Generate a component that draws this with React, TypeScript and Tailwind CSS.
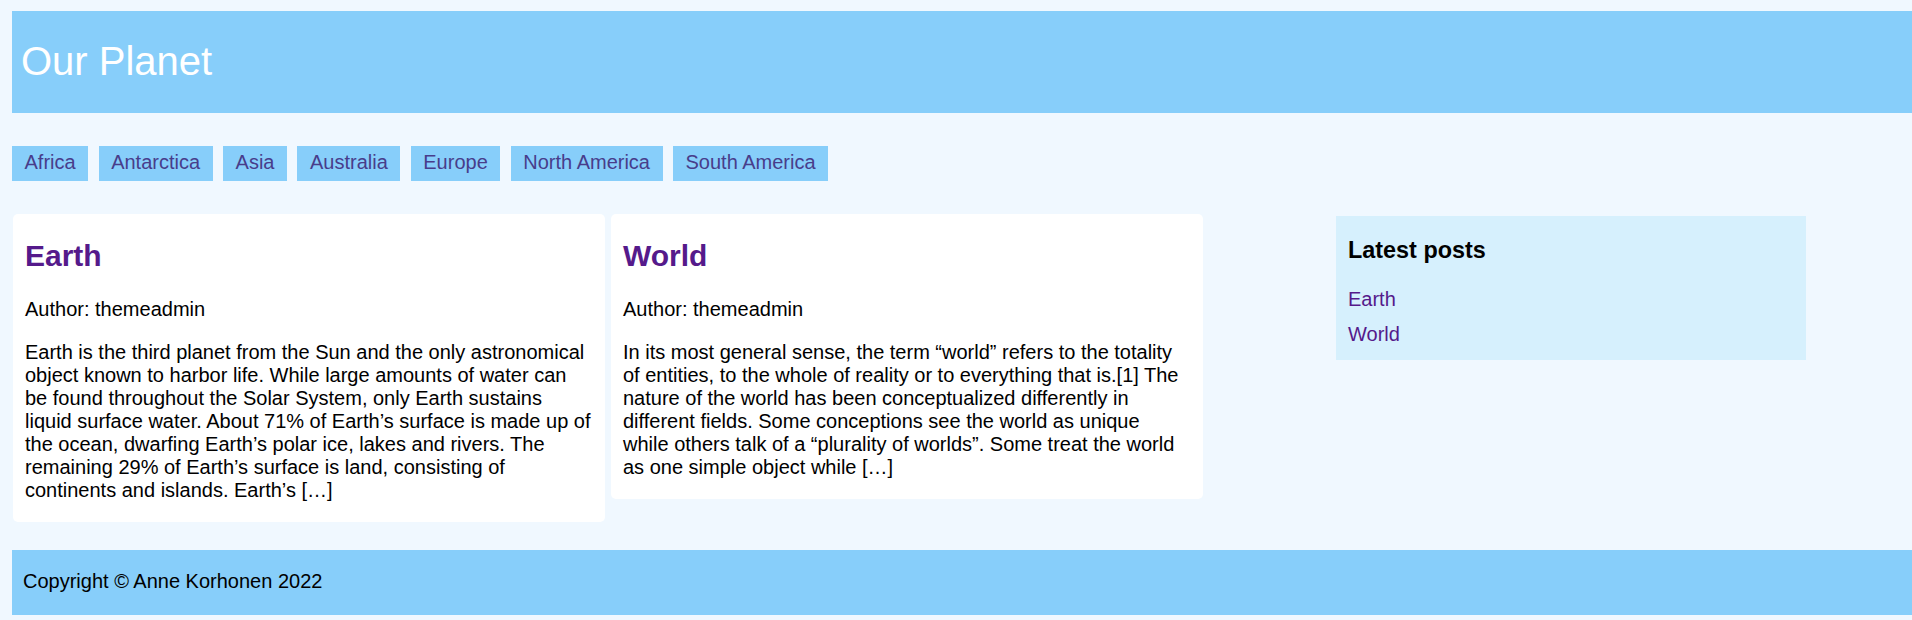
const CONTINENTS = [
  "Africa",
  "Antarctica",
  "Asia",
  "Australia",
  "Europe",
  "North America",
  "South America",
];

const POSTS = [
  {
    title: "Earth",
    author: "themeadmin",
    excerpt:
      "Earth is the third planet from the Sun and the only astronomical object known to harbor life. While large amounts of water can be found throughout the Solar System, only Earth sustains liquid surface water. About 71% of Earth’s surface is made up of the ocean, dwarfing Earth’s polar ice, lakes and rivers. The remaining 29% of Earth’s surface is land, consisting of continents and islands. Earth’s […]",
    narrow: false,
  },
  {
    title: "World",
    author: "themeadmin",
    excerpt:
      "In its most general sense, the term “world” refers to the totality of entities, to the whole of reality or to everything that is.[1] The nature of the world has been conceptualized differently in different fields. Some conceptions see the world as unique while others talk of a “plurality of worlds”. Some treat the world as one simple object while […]",
    narrow: true,
  },
];

interface PostCardProps {
  title: string;
  author: string;
  excerpt: string;
  narrow: boolean;
}

const PostCard = ({ title, author, excerpt, narrow }: PostCardProps) => (
  <article className="w-[592px] shrink-0 rounded-[5px] bg-white px-[12px] pt-[25px] pb-[20px]">
    <h2 className="mb-[25px] text-[30px] font-bold leading-[34.5px] text-[#551a8b]">
      <a href="#">{title}</a>
    </h2>
    <p className="mb-[20px] leading-[23px]">Author: {author}</p>
    <p className={narrow ? "max-w-[560px] leading-[23px]" : "leading-[23px]"}>{excerpt}</p>
  </article>
);

export default function App() {
  return (
    <div className="min-h-screen bg-[#f0f8ff] pt-[11px] pl-[12px] text-[20px] text-black font-['Liberation_Sans',Arial,sans-serif]">
      <header className="bg-[#87cefa] pl-[9px]">
        <h1 className="pt-[27px] pb-[28.5px] text-[40px] leading-[46px] text-white">Our Planet</h1>
      </header>

      <nav className="mt-[33px] flex gap-[10.5px]">
        {CONTINENTS.map((name) => (
          <a
            key={name}
            href="#"
            className="bg-[#87cefa] px-[12.5px] pt-[5px] pb-[7px] leading-[23px] text-[#483d8b]"
          >
            {name}
          </a>
        ))}
      </nav>

      <main className="mt-[33px] flex items-start pl-[1px]">
        <div className="flex items-start gap-[6px]">
          {POSTS.map((post) => (
            <PostCard key={post.title} {...post} />
          ))}
        </div>

        <aside className="ml-[133px] mt-[2px] w-[470px] bg-[#d6f0fd] px-[12px] pt-[21.5px] pb-[14px]">
          <h3 className="text-[23.4px] font-bold leading-[27px]">Latest posts</h3>
          <ul className="mt-[24px] flex flex-col gap-[12.3px]">
            {POSTS.map((post) => (
              <li key={post.title} className="leading-[23px]">
                <a href="#" className="text-[#551a8b]">
                  {post.title}
                </a>
              </li>
            ))}
          </ul>
        </aside>
      </main>

      <footer className="mt-[28px] bg-[#87cefa] pl-[11px] pt-[20px] pb-[21.5px]">
        <p className="leading-[23px]">Copyright © Anne Korhonen 2022</p>
      </footer>
    </div>
  );
}
